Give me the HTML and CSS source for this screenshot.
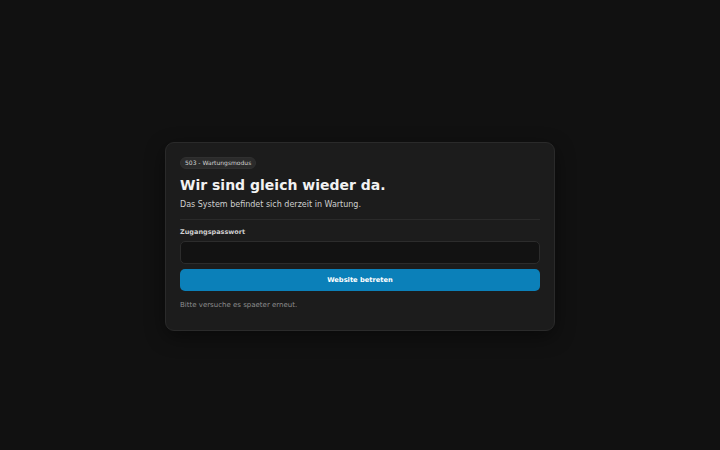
FILE: index.html
```html
<!DOCTYPE html>
<html lang="de">
<head>
<meta charset="utf-8">
<title>503 - Wartungsmodus</title>
<link rel="stylesheet" href="styles.css">
</head>
<body>
<main class="page">
  <section class="card">
    <span class="badge">503 - Wartungsmodus</span>
    <h1 class="title">Wir sind gleich wieder da.</h1>
    <p class="subtitle">Das System befindet sich derzeit in Wartung.</p>
    <hr class="divider">
    <form class="form">
      <label class="label" for="pw">Zugangspasswort</label>
      <input class="input" id="pw" type="password">
      <button class="button" type="button">Website betreten</button>
    </form>
    <p class="note">Bitte versuche es spaeter erneut.</p>
  </section>
</main>
</body>
</html>
```
FILE: styles.css
```css
* { box-sizing: border-box; }
html, body { margin: 0; padding: 0; }
body {
  background: #111111;
  font-family: "DejaVu Sans", sans-serif;
  color: #f0f0f0;
}
.page {
  height: 450px;
  padding-top: 23px;
  display: flex;
  align-items: center;
  justify-content: center;
}
.card {
  width: 390px;
  height: 189px;
  background: #1c1c1c;
  border: 1px solid #2a2a2a;
  border-radius: 9px;
  padding: 14px 14px 0;
  display: flex;
  flex-direction: column;
  align-items: flex-start;
  box-shadow: 0 6px 20px rgba(0,0,0,0.45);
}
.badge {
  font-size: 6px;
  color: #d2d2d2;
  background: #2b2b2b;
  border: 1px solid #303030;
  border-radius: 6px;
  padding: 1px 4px;
  line-height: 8px;
}
.title {
  margin: 7px 0 0;
  font-size: 14px;
  font-weight: bold;
  line-height: 18px;
  color: #f2f2f2;
}
.subtitle {
  margin: 6px 0 0;
  font-size: 8px;
  line-height: 10px;
  color: #cfcfcf;
}
.divider {
  width: 100%;
  margin: 9px 0 0;
  border: 0;
  border-top: 1px solid #2a2a2a;
}
.form {
  width: 100%;
  display: flex;
  flex-direction: column;
  margin-top: 8px;
}
.label {
  font-size: 6.5px;
  font-weight: bold;
  color: #cfcfcf;
  line-height: 9px;
}
.input {
  margin-top: 4px;
  height: 23px;
  width: 100%;
  background: #121212;
  border: 1px solid #2c2c2c;
  border-radius: 5px;
}
.button {
  margin-top: 5px;
  height: 22px;
  width: 100%;
  background: #0b80b9;
  border: 0;
  border-radius: 5px;
  color: #ffffff;
  font-family: "DejaVu Sans", sans-serif;
  font-size: 6.7px;
  font-weight: bold;
}
.note {
  margin: 9px 0 0;
  font-size: 7px;
  line-height: 10px;
  color: #8e8e8e;
}
```
